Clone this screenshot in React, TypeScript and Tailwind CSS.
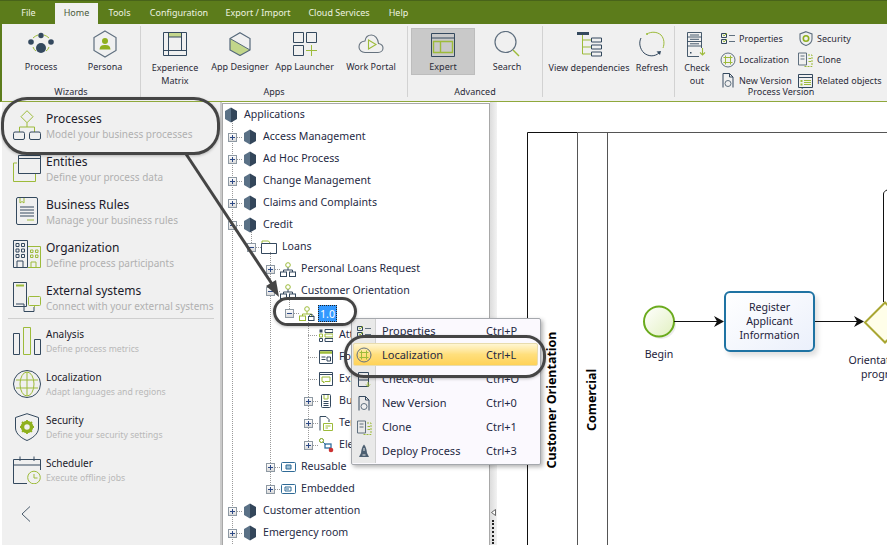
import type { ReactNode } from "react";

const NAVY = "#34495e";
const LIME = "#9dbb3a";

const TABS = [
  { label: "File", w: "w-[53px]" },
  { label: "Home", w: "w-[43px]", active: true },
  { label: "Tools", w: "w-[43px]" },
  { label: "Configuration", w: "w-[76px]" },
  { label: "Export / Import", w: "w-[82px]" },
  { label: "Cloud Services", w: "w-[80px]" },
  { label: "Help", w: "w-[39px]" },
];

function Svg({ w, h, children }: { w: number; h: number; children: ReactNode }) {
  return (
    <svg width={w} height={h} viewBox={`0 0 ${w} ${h}`} fill="none" className="shrink-0">
      {children}
    </svg>
  );
}

/* ribbon icons */
const ProcessIcon = () => (
  <Svg w={30} h={24}>
    <path d="M7 6Q9 4 12 3M18 3Q21 4 23 6M7 15Q8 18 10 19M20 19Q22 18 23 15" stroke={LIME} strokeWidth="1" />
    <circle cx="15" cy="3.5" r="2.7" fill={NAVY} />
    <circle cx="5" cy="10" r="2.8" fill={NAVY} />
    <circle cx="25" cy="10" r="2.8" fill={NAVY} />
    <circle cx="15" cy="16" r="5" fill={NAVY} />
  </Svg>
);
const PersonaIcon = () => (
  <Svg w={24} h={28}>
    <path d="M12 1 23 7.5V20.5L12 27 1 20.5V7.5Z" stroke="#5f6f7f" strokeWidth="1.2" />
    <circle cx="12" cy="11" r="3" fill="#8fb01e" />
    <path d="M6.5 19.5C7 15.5 9 15 12 15S17 15.500 17.500 19.500Z" fill="#8fb01e" />
  </Svg>
);
const MatrixIcon = () => (
  <Svg w={24} h={24}>
    <path d="M5.500 1H18.500V5H5.500Z" fill="#c4d68c" />
    <path d="M.5.500H23.500V23.500H.5ZM5.500.500V23.500M18.500.500V18.500M.5 18.500H23.500M5.500 5H18.500" stroke={NAVY} />
  </Svg>
);
const DesignerIcon = () => (
  <Svg w={22} h={24}>
    <path d="M1 6.500 21 18 11 23.500 1 18Z" fill="#c2d68a" />
    <path d="M11 .7 21 6.500V18L11 23.500 1 18V6.500Z" stroke="#55687a" strokeWidth="1.2" />
    <path d="M1 6.500 21 18" stroke="#55687a" />
  </Svg>
);
const LauncherIcon = () => (
  <Svg w={24} h={24}>
    <path d="M.5.500H10.500V10.500H.5ZM13.500.500H23.500V10.500H13.500ZM.5 13.500H10.500V23.500H.5Z" stroke={NAVY} />
    <path d="M18.500 13V24M13 18.500H24" stroke={LIME} />
  </Svg>
);
const PortalIcon = () => (
  <Svg w={26} h={20}>
    <path d="M7 18.500H20C23 18.500 25 16.500 25 14S23 10 20.500 9.500C20 4.500 17 1 13.500 1 10 1 7.500 3.500 7 7 3 7.500 1 10 1 13S3.500 18.500 7 18.500Z" stroke="#66727e" strokeWidth="1.1" />
    <path d="M10.500 6V15L18 10.500Z" stroke={LIME} strokeWidth="1.1" />
  </Svg>
);
const ExpertIcon = () => (
  <Svg w={24} h={24}>
    <path d="M.5.500H23.500V23.500H.5ZM.5 5H23.500" stroke={NAVY} />
    <path d="M2.500 8.500H9.500V19.500H2.500ZM9.500 8.500H21.500V19.500H9.500Z" stroke={LIME} strokeWidth="1.4" />
  </Svg>
);
const SearchIcon = () => (
  <Svg w={26} h={26}>
    <circle cx="11.500" cy="11" r="10.500" stroke="#5f6f7f" strokeWidth="1.2" />
    <path d="M19 19 25 25" stroke={LIME} strokeWidth="1.4" />
  </Svg>
);
const DepsIcon = () => (
  <Svg w={26} h={26}>
    <path d="M1 1H13V4H1Z" fill={NAVY} />
    <path d="M6.500 4V23H15M6.500 9H15M6.500 16H15" stroke={LIME} />
    <path d="M15.500 7H25.500V11H15.500ZM15.500 14H25.500V18H15.500ZM15.500 21H25.500V25H15.500Z" stroke={NAVY} />
  </Svg>
);
const RefreshIcon = () => (
  <Svg w={26} h={26}>
    <path d="M8 3C12 .5 18 .5 22 4 25.500 8 25.500 13 24 17" stroke={LIME} />
    <circle cx="8" cy="3" r="1" fill={LIME} />
    <path d="M2 7C-.5 12 1 18 5 22 10 26 16 25.500 20 22" stroke={NAVY} />
    <path d="M17.500 20.500 22 20 21 24Z" fill={NAVY} />
  </Svg>
);
const CheckoutIcon = () => (
  <Svg w={20} h={25}>
    <path d="M.5.500H14.500V24.500H.5ZM.5 5H14.500M.5 9.500H14.500M.5 14H14.500M3 3H12M3 7.300H12M3 11.800H12" stroke={NAVY} strokeWidth=".9" />
    <rect x="3" y="20" width="1.500" height="1.500" fill={NAVY} />
    <rect x="12" y="16" width="7" height="9" fill="#f0f0f0" />
    <path d="M15.500 16V23M13 20.500 15.500 23 18 20.500" stroke={LIME} strokeWidth="1.100" />
  </Svg>
);
const PropsIcon = () => (
  <Svg w={14} h={13}>
    <path d="M.5 1.500H5.500V5.500H.5ZM.5 7.500H5.500V11.500H.5Z" stroke={NAVY} />
    <path d="M2 2.500 3 4 6 1M2 8.500 3 10 6 7" stroke={LIME} />
    <path d="M8 3.500H14M8 9.500H14" stroke="#60707f" />
  </Svg>
);
const GlobeSmall = () => (
  <Svg w={16} h={16}>
    <circle cx="8" cy="8" r="7" stroke="#5f6f7f" />
    <path d="M5.500 3.500V12.500M10.500 3.500V12.500M3.500 5.500H12.500M3.500 10.500H12.500" stroke={LIME} />
  </Svg>
);
const VersionIcon = () => (
  <Svg w={12} h={15}>
    <path d="M1 14.500V.5H7.500L11 4V14.500" stroke={NAVY} />
    <path d="M7.500.5V4H11" stroke={NAVY} />
    <circle cx="6" cy="10.500" r="3" fill="#f0f0f0" stroke="#60707f" />
  </Svg>
);
const ShieldSmall = () => (
  <Svg w={14} h={15}>
    <path d="M7 .7 13 3V8C13 11 10 13.500 7 14.500 4 13.500 1 11 1 8V3Z" stroke="#5f6f7f" strokeWidth="1.100" />
    <circle cx="7" cy="7.500" r="2.700" stroke="#8fb01e" strokeWidth="1.600" />
  </Svg>
);
const CloneIcon = () => (
  <Svg w={15} h={15}>
    <path d="M.5 1H8.500V13H.5ZM2.500 4H6.500M2.500 7H6.500" stroke="#60707f" />
    <path d="M10 3H14V14.500H6" stroke={LIME} strokeDasharray="2 1" />
    <path d="M10.500 6.500H13M10.500 9.500H13" stroke={LIME} />
  </Svg>
);
const RelatedIcon = () => (
  <Svg w={15} h={14}>
    <path d="M.5.500H14.500V13.500H.5ZM.5 3.500H14.500" stroke={NAVY} />
    <path d="M6 6.500H13M6 8.500H13M6 10.500H13" stroke={LIME} />
    <path d="M2.500 6H4.500V8H2.500ZM2.500 9.500H4.500V11.500H2.500Z" fill={LIME} />
  </Svg>
);

function RibbonItem({ w, label, icon, labelClass = "" }: { w: string; label: ReactNode; icon: ReactNode; labelClass?: string }) {
  return (
    <div className={`${w} flex flex-col items-center pt-[4px] shrink-0`}>
      <div className="h-[32px] shrink-0 flex items-center justify-center">{icon}</div>
      <div className={`text-center leading-[13px] shrink-0 ${labelClass}`}>{label}</div>
    </div>
  );
}

function RibbonGroup({ w, label, children }: { w: string; label?: string; children: ReactNode }) {
  return (
    <div className={`${w} shrink-0 flex`}>
      <div className="flex-1 flex flex-col">
        <div className="h-[60px] flex">{children}</div>
        {label && <div className="h-[14px] leading-[15px] text-center">{label}</div>}
      </div>
      <div className="w-px bg-[#d2d2d2] mt-[2px] mb-[4px]" />
    </div>
  );
}

function SmallItem({ icon, label }: { icon: ReactNode; label: string }) {
  return (
    <div className="h-[21px] flex items-center whitespace-nowrap">
      <div className="w-[17px] flex justify-center">{icon}</div>
      <span className="ml-[3px]">{label}</span>
    </div>
  );
}

function Ribbon() {
  return (
    <div className="h-[101px] border-l-2 border-[#5c7c1b] bg-[#f0f0f0] border-b border-b-[#8fa83c] box-content text-[9px] text-[#2b2b38] shrink-0">
      <div className="h-[24px] -ml-[2px] bg-[#5c7c1b] border-t border-[#48631a] flex items-end pl-[2px]">
        {TABS.map((t) => (
          <div
            key={t.label}
            className={`${t.w} h-[21px] leading-[19px] text-center ${t.active ? "bg-[#f0f0f0] text-[#4a5a3a]" : "text-[#eef3e0]"}`}
          >
            {t.label}
          </div>
        ))}
      </div>
      <div className="flex h-[77px]">
        <RibbonGroup w="w-[139px]" label="Wizards">
          <RibbonItem w="w-[78px]" label="Process" icon={<ProcessIcon />} />
          <RibbonItem w="w-[50px]" label="Persona" icon={<PersonaIcon />} />
        </RibbonGroup>
        <RibbonGroup w="w-[267px]" label="Apps">
          <RibbonItem w="w-[68px]" label={<>Experience<br />Matrix</>} icon={<MatrixIcon />} labelClass="mt-[1px]" />
          <RibbonItem w="w-[62px]" label="App Designer" icon={<DesignerIcon />} />
          <RibbonItem w="w-[67px]" label="App Launcher" icon={<LauncherIcon />} />
          <RibbonItem w="w-[66px]" label="Work Portal" icon={<PortalIcon />} />
        </RibbonGroup>
        <RibbonGroup w="w-[135px]" label="Advanced">
          <div className="ml-[3px] mt-[4px] w-[64px] h-[47px] bg-[#c9c9c9] border border-[#bdbdbd] flex flex-col items-center shrink-0">
            <div className="h-[31px] flex items-center"><ExpertIcon /></div>
            <div className="leading-[13px]">Expert</div>
          </div>
          <RibbonItem w="w-[64px]" label="Search" icon={<SearchIcon />} />
        </RibbonGroup>
        <RibbonGroup w="w-[132px]">
          <RibbonItem w="w-[92px]" label="View dependencies" icon={<DepsIcon />} labelClass="mt-[1px] whitespace-nowrap" />
          <RibbonItem w="w-[34px]" label="Refresh" icon={<RefreshIcon />} labelClass="mt-[1px]" />
        </RibbonGroup>
        <div className="w-[212px] shrink-0 flex flex-col">
          <div className="h-[60px] flex">
            <RibbonItem w="w-[44px]" label={<>Check<br />out</>} icon={<CheckoutIcon />} labelClass="mt-[1px]" />
            <div className="w-[78px] pt-[4px] shrink-0">
              <SmallItem icon={<PropsIcon />} label="Properties" />
              <SmallItem icon={<GlobeSmall />} label="Localization" />
              <SmallItem icon={<VersionIcon />} label="New Version" />
            </div>
            <div className="pt-[4px]">
              <SmallItem icon={<ShieldSmall />} label="Security" />
              <SmallItem icon={<CloneIcon />} label="Clone" />
              <SmallItem icon={<RelatedIcon />} label="Related objects" />
            </div>
          </div>
          <div className="relative h-[14px] leading-[15px] text-center">Process Version</div>
        </div>
      </div>
    </div>
  );
}

/* sidebar icons */
const S = { stroke: NAVY, strokeWidth: 1 };
const L = { stroke: LIME, strokeWidth: 1 };
const SB_TOP = [
  {
    title: "Processes", sub: "Model your business processes",
    icon: (
      <Svg w={28} h={30}>
        <path d="M14 .7 20 6.700 14 12.700 8 6.700Z" {...L} />
        <path d="M14 12.700V17M6.500 22V17H21.500V22" {...L} />
        <rect x=".5" y="22" width="11" height="7.500" rx="1.500" {...S} />
        <rect x="16.500" y="22" width="11" height="7.500" rx="1.500" {...S} />
      </Svg>
    ),
  },
  {
    title: "Entities", sub: "Define your process data",
    icon: (
      <Svg w={28} h={27}>
        <path d="M4 8H.5V26.500H22.500V19" {...L} />
        <path d="M5.500.5H27.500V18.500H5.500ZM5.500 3.500H27.500" {...S} />
      </Svg>
    ),
  },
  {
    title: "Business Rules", sub: "Manage your business rules",
    icon: (
      <Svg w={22} h={28}>
        <rect x=".5" y=".5" width="21" height="27" rx="1.500" {...S} />
        <path d="M4 1V6L6 4.500 8 6V1" {...L} />
        <path d="M4 10H18M4 13H18M4 16H18M4 19H18" {...S} />
        <path d="M11 23H18" {...L} />
      </Svg>
    ),
  },
  {
    title: "Organization", sub: "Define process participants",
    icon: (
      <Svg w={28} h={28}>
        <path d="M.5.5H14.500V27.500H.5ZM4 27.500V21H10V27.500" {...S} />
        <path d="M3 3.500H6V6.500H3ZM8.500 3.500H11.500V6.500H8.500ZM3 9H6V12H3ZM8.500 9H11.500V12H8.500ZM3 14.500H6V17.500H3ZM8.500 14.500H11.500V17.500H8.500Z" {...S} />
        <path d="M15 6.500H27.500V27.500H15M18 27.500V22H23V27.500M17.500 10H20V12.500H17.500ZM22.500 10H25V12.500H22.500ZM17.500 15H20V17.500H17.500ZM22.500 15H25V17.500H22.500Z" {...L} />
      </Svg>
    ),
  },
  {
    title: "External systems", sub: "Connect with your external systems",
    icon: (
      <Svg w={28} h={30}>
        <path d="M.5.5H13.500V24.500H.5ZM3 22H11V29.500" {...S} />
        <path d="M3 3.500H11" stroke={LIME} strokeWidth="2" />
        <path d="M11 29.500H21V25" {...S} />
        <rect x="15.500" y="14.500" width="12" height="9" rx="1" {...L} />
        <path d="M21.500 23.500V25.500" {...L} />
      </Svg>
    ),
  },
];
const SB_BOTTOM = [
  {
    title: "Analysis", sub: "Define process metrics",
    icon: (
      <Svg w={28} h={28}>
        <path d="M.5 6.500H6.500V27.500H.5ZM21.500 12.500H27.500V27.500H21.500Z" {...S} />
        <path d="M10.500.5H17.500V27.500H10.500Z" {...L} />
      </Svg>
    ),
  },
  {
    title: "Localization", sub: "Adapt languages and regions",
    icon: (
      <Svg w={28} h={28}>
        <circle cx="14" cy="14" r="13.500" {...S} />
        <ellipse cx="14" cy="14" rx="7" ry="12" {...L} />
        <path d="M3 10H25M3 18H25M14 2V26" {...L} />
      </Svg>
    ),
  },
  {
    title: "Security", sub: "Define your security settings",
    icon: (
      <Svg w={24} h={28}>
        <path d="M12 .7 23.500 4.500V15C23.500 21 17 25.500 12 27.500 7 25.500.5 21 .5 15V4.500Z" {...S} />
        <circle cx="12" cy="14" r="4.500" stroke="#8fb01e" strokeWidth="3.500" />
        <path d="M12 7V21M5 14H19M7 9 17 19M17 9 7 19" stroke="#8fb01e" strokeWidth="1.800" strokeDasharray="2 10" />
      </Svg>
    ),
  },
  {
    title: "Scheduler", sub: "Execute offline jobs",
    icon: (
      <Svg w={28} h={28}>
        <path d="M14 27.500H.5V3.500H27.500V14M.5 9H27.500M7 .5V5M21 .5V5" {...S} />
        <circle cx="21" cy="21.500" r="6.300" fill="#f0f0f0" {...L} />
        <path d="M21 18V22H24.500" {...L} />
      </Svg>
    ),
  },
];

function Sidebar() {
  return (
    <div className="w-[220px] ml-[2px] shrink-0 bg-[#f0f0f0] border-r-2 border-[#cacaca] pt-[3px] relative">
      {SB_TOP.map((it) => (
        <div key={it.title} className="h-[43px] flex items-center pl-[10px]">
          <div className="w-[30px] -mt-[3px] flex justify-center">{it.icon}</div>
          <div className="ml-[4px] whitespace-nowrap">
            <div className="text-[12px] leading-[16px] text-[#1a1a2a]">{it.title}</div>
            <div className="text-[10px] leading-[15px] text-[#b0b0b0]">{it.sub}</div>
          </div>
        </div>
      ))}
      <div className="h-px mx-[6px] bg-[#cfcfcf] -mt-[2px]" />
      <div className="h-px" />
      {SB_BOTTOM.map((it) => (
        <div key={it.title} className="h-[43px] flex items-center pl-[10px]">
          <div className="w-[30px] -mt-[2px] flex justify-center">{it.icon}</div>
          <div className="ml-[4px] whitespace-nowrap">
            <div className="text-[10px] leading-[15px] text-[#1a1a2a]">{it.title}</div>
            <div className="text-[8.7px] leading-[15px] text-[#b8b8b8]">{it.sub}</div>
          </div>
        </div>
      ))}
      <div className="pl-[19px] pt-[14px]">
        <svg width="10" height="16" viewBox="0 0 10 16" fill="none">
          <path d="M9 .5 1 8 9 15.500" stroke="#4a5b6c" />
        </svg>
      </div>
    </div>
  );
}

/* tree */
const Hex = () => (
  <Svg w={16} h={16}>
    <path d="M8 .5V15.500L2 12V4Z" fill="#5a7186" />
    <path d="M8 .5 14 4V12L8 15.500Z" fill="#33465a" />
  </Svg>
);
const FolderIcon = () => (
  <Svg w={16} h={14}>
    <path d="M1 3V1H7.500L9 3" stroke={LIME} />
    <path d="M.5 13.500V3.500H15.500V13.500Z" stroke={NAVY} />
  </Svg>
);
const ProcNode = ({ lock }: { lock?: boolean }) => (
  <Svg w={16} h={15}>
    <circle cx="8" cy="3" r="2.300" stroke={LIME} />
    <path d="M8 5.500V8M3.500 10V8H12.500V10" stroke={lock ? LIME : NAVY} />
    <rect x=".5" y="10" width="6" height="4.500" stroke={lock ? LIME : NAVY} />
    {lock ? (
      <>
        <rect x="9.500" y="10.500" width="5.500" height="4" stroke={NAVY} />
        <path d="M10.500 10.500V9.500C10.500 8 14 8 14 9.500V10.500" stroke={NAVY} />
      </>
    ) : (
      <rect x="9.500" y="10" width="6" height="4.500" stroke={NAVY} />
    )}
  </Svg>
);
const AttrIcon = () => (
  <Svg w={14} h={13}>
    <path d="M.5.5H3.500V3.500H.5Z" fill={NAVY} />
    <path d="M6 .5H14V3.500H6ZM6 9.500H14V12.500H6Z" stroke={NAVY} />
    <path d="M.5 5H3.500V8H.5ZM6 5H14V8H6Z" stroke={LIME} />
    <path d="M.5 9.500H3.500V12.500H.5Z" stroke={NAVY} />
  </Svg>
);
const FormIcon = () => (
  <Svg w={14} h={14}>
    <path d="M.5.5H13.500V13.500H.5Z" stroke={NAVY} />
    <path d="M1 2.500H13" stroke={LIME} strokeWidth="2.500" />
    <path d="M2.500 7H6.500M2.500 9.500H6.500" stroke={NAVY} />
    <path d="M8 7H11.500V11H8Z" stroke={NAVY} />
  </Svg>
);
const ExprIcon = () => (
  <Svg w={14} h={14}>
    <path d="M.5.5H13.500V13.500H.5ZM.5 2.500H13.500" stroke={NAVY} />
    <path d="M3 5H11V9.500H6L4.500 11V9.500H3Z" stroke={LIME} />
  </Svg>
);
const BookIcon = () => (
  <Svg w={10} h={14}>
    <rect x=".5" y=".5" width="9" height="13" rx="1" stroke={NAVY} />
    <path d="M3 1V5H7V1" stroke={LIME} />
    <path d="M2.500 7.500H7.500M2.500 9.500H7.500M2.500 11.500H7.500" stroke={NAVY} />
  </Svg>
);
const TplIcon = () => (
  <Svg w={14} h={15}>
    <path d="M1 14.500V.5H7L10 3.500V6" stroke={NAVY} />
    <path d="M4.500 7.500H13.500V14.500H4.500Z" stroke={LIME} fill="#fff" />
    <path d="M6.500 10H11.500M6.500 12H9" stroke={LIME} />
  </Svg>
);
const EleIcon = () => (
  <Svg w={15} h={15}>
    <circle cx="2.500" cy="2.500" r="2" stroke="#6f9a10" />
    <path d="M4 4 7 7" stroke="#2f6fa0" />
    <rect x="6" y="6" width="6" height="4" stroke="#2f6fa0" strokeWidth="1.300" />
    <path d="M10 10 11.500 11" stroke={NAVY} />
    <circle cx="12" cy="12" r="2.300" fill="#c33" />
  </Svg>
);
const ReuseIcon = () => (
  <Svg w={15} h={10}>
    <rect x=".5" y=".5" width="14" height="9" rx="1" stroke="#2f6a96" />
    <path d="M5 3H10V7H5Z" stroke="#2f6a96" fill="#9ec0d6" />
  </Svg>
);
const EmbedIcon = () => (
  <Svg w={15} h={10}>
    <rect x=".5" y=".5" width="14" height="9" rx="1" stroke="#2f6a96" />
    <path d="M4 3H10V7H4ZM5 5H8" stroke="#2f6a96" />
  </Svg>
);

type TreeRow = { level: number; label: string; icon: ReactNode; exp?: "+" | "-"; selected?: boolean };
const hex = <Hex />;
const ROWS: TreeRow[] = [
  { level: 0, label: "Applications", icon: hex },
  { level: 1, label: "Access Management", icon: hex, exp: "+" },
  { level: 1, label: "Ad Hoc Process", icon: hex, exp: "+" },
  { level: 1, label: "Change Management", icon: hex, exp: "+" },
  { level: 1, label: "Claims and Complaints", icon: hex, exp: "+" },
  { level: 1, label: "Credit", icon: hex, exp: "-" },
  { level: 2, label: "Loans", icon: <FolderIcon />, exp: "-" },
  { level: 3, label: "Personal Loans Request", icon: <ProcNode />, exp: "+" },
  { level: 3, label: "Customer Orientation", icon: <ProcNode />, exp: "-" },
  { level: 4, label: "1.0", icon: <ProcNode lock />, exp: "-", selected: true },
  { level: 5, label: "Attributes", icon: <AttrIcon /> },
  { level: 5, label: "Forms", icon: <FormIcon /> },
  { level: 5, label: "Expressions", icon: <ExprIcon /> },
  { level: 5, label: "Business Rules", icon: <BookIcon />, exp: "+" },
  { level: 5, label: "Templates", icon: <TplIcon />, exp: "+" },
  { level: 5, label: "Elements", icon: <EleIcon />, exp: "+" },
  { level: 3, label: "Reusable", icon: <ReuseIcon />, exp: "+" },
  { level: 3, label: "Embedded", icon: <EmbedIcon />, exp: "+" },
  { level: 1, label: "Customer attention", icon: hex, exp: "+" },
  { level: 1, label: "Emergency room", icon: hex, exp: "+" },
];

function Expander({ kind }: { kind: "+" | "-" }) {
  return (
    <svg width="9" height="9" viewBox="0 0 9 9" className="shrink-0 relative">
      <defs>
        <linearGradient id="expg" x1="0" y1="0" x2="0" y2="1">
          <stop offset="0" stopColor="#ffffff" />
          <stop offset="1" stopColor="#d8d8d8" />
        </linearGradient>
      </defs>
      <rect x=".5" y=".5" width="8" height="8" fill="url(#expg)" stroke="#8e99a3" />
      <path d={kind === "+" ? "M2 4.500H7M4.500 2V7" : "M2 4.500H7"} stroke="#2d4a86" />
    </svg>
  );
}

function TreeGuides() {
  // dotted connectors, coordinates relative to the tree's top left corner
  const vert = [
    [9, 15, 442],
    [28, 126, 143],
    [47, 148, 385],
    [66, 192, 209],
    [85, 214, 341],
  ];
  return (
    <svg className="absolute left-0 top-0" width="266" height="442" fill="none">
      {vert.map(([x, a, b]) => (
        <line key={x} x1={x + 0.5} x2={x + 0.5} y1={a} y2={b} stroke="#9a9a9a" strokeDasharray="1 1" />
      ))}
      {ROWS.map((r, i) => {
        if (r.level === 0) return null;
        const x = 5 + (r.level - 1) * 19;
        const y = i * 22 + 11.5;
        return <line key={i} x1={x + (r.exp ? 9 : 4)} x2={x + 14} y1={y} y2={y} stroke="#9a9a9a" strokeDasharray="1 1" />;
      })}
    </svg>
  );
}

function Tree() {
  return (
    <div className="w-[268px] shrink-0 bg-white border-l border-r border-[#a8a8a8] mt-px overflow-hidden">
      <div className="h-px bg-[#a8a8a8]" />
      <div className="relative text-[10.6px] text-[#1f2a44]">
        <TreeGuides />
        {ROWS.map((r) => (
          <div
            key={r.label}
            className="relative h-[22px] flex items-center whitespace-nowrap"
            style={{ paddingLeft: r.level === 0 ? 0 : 5 + (r.level - 1) * 19 }}
          >
            {r.level > 0 &&
              (r.exp ? <Expander kind={r.exp} /> : <span className="w-[9px] shrink-0" />)}
            <div className={`w-[16px] flex justify-center shrink-0 ${r.level > 0 ? "ml-[5px]" : ""}`}>{r.icon}</div>
            {r.selected ? (
              <span className="ml-[3px] w-[19px] h-[17px] leading-[16px] text-center bg-[#3399ff] text-white border border-dotted border-[#222] text-[10.6px]">{r.label}</span>
            ) : (
              <span className="ml-[5px]">{r.label}</span>
            )}
          </div>
        ))}
      </div>
    </div>
  );
}

function Splitter() {
  return (
    <div className="w-[7px] shrink-0 bg-gradient-to-r from-[#dcdcdc] to-[#f2f2f2] flex flex-col items-center pt-[407px]">
      <svg width="5" height="7" viewBox="0 0 5 7" className="-ml-[1px]">
        <path d="M4.500.5V6.500L.5 3.500Z" fill="#fff" stroke="#444" strokeWidth=".8" />
      </svg>
      <div className="w-[2px] h-[24px] mt-[4px] border-l-2 border-dotted border-[#222] -ml-[1px]" />
    </div>
  );
}

/* bpmn canvas, coordinates relative to the canvas */
function Canvas() {
  return (
    <div className="relative flex-1 bg-white overflow-hidden text-[10.6px] text-[#22223a]">
      <svg className="absolute inset-0" width="390" height="443" fill="none">
        <defs>
          <linearGradient id="startg" x1="0" y1="0" x2="1" y2="1">
            <stop offset="0" stopColor="#ffffff" />
            <stop offset="1" stopColor="#e2f0c0" />
          </linearGradient>
        </defs>
        <path d="M30.500 443V30.500H80.500" stroke="#111" />
        <path d="M80.500 30.500H390M80.500 30.500V443M110.500 30.500V443" stroke="#555" />
        <circle cx="164" cy="222" r="15" fill="#000" opacity=".08" />
        <circle cx="162" cy="219.500" r="15" fill="url(#startg)" stroke="#6bab1e" strokeWidth="2" />
        <path d="M177 219.500H222" stroke="#111" />
        <path d="M318 219.500H365" stroke="#111" />
        <path d="M217 214 227 219.500 217 225 220 219.500Z" fill="#111" />
        <path d="M357 214 367 219.500 357 225 360 219.500Z" fill="#111" />
        <path d="M386.500 200V92C386.500 90 388 89 390 88" stroke="#111" />
        <path d="M388 200.500 368 220.500 388 240.500 408 220.500Z" fill="#fffee9" stroke="#a9a632" strokeWidth="2" />
      </svg>
      <div className="absolute left-[227px] top-[189px] w-[91px] h-[61px] pb-[2px] rounded-[6px] border-2 border-[#1f73a3] bg-gradient-to-br from-white to-[#ebf0fb] shadow-[3px_4px_5px_rgba(0,0,0,0.12)] flex items-center justify-center text-center leading-[14px]">
        <div>Register<br />Applicant<br />Information</div>
      </div>
      <div className="absolute left-[132px] w-[60px] top-[245px] text-center leading-[14px]">Begin</div>
      <div className="absolute left-[346px] w-[80px] top-[251px] text-center leading-[14px]">Orientation in<br />progress</div>
      <div className="absolute left-[55px] top-[298px] -translate-x-1/2 -translate-y-1/2 -rotate-90 whitespace-nowrap font-bold text-[12.5px] text-black">Customer Orientation</div>
      <div className="absolute left-[95px] top-[298px] -translate-x-1/2 -translate-y-1/2 -rotate-90 whitespace-nowrap font-bold text-[12.5px] text-black">Comercial</div>
    </div>
  );
}

/* context menu */
const MENU = [
  { label: "Properties", key: "Ctrl+P", icon: <PropsIcon /> },
  { label: "Localization", key: "Ctrl+L", icon: <GlobeSmall />, active: true },
  { label: "Check-out", key: "Ctrl+O", icon: (
    <Svg w={13} h={15}>
      <path d="M.5.5H10.500V14.500H.5ZM.5 4H10.500M.5 8H10.500" stroke={NAVY} />
      <path d="M10 10V14M8 12.500 10 14.500 12 12.500" stroke={LIME} />
    </Svg>
  ) },
  { label: "New Version", key: "Ctrl+0", icon: <VersionIcon /> },
  { label: "Clone", key: "Ctrl+1", icon: <CloneIcon /> },
  { label: "Deploy Process", key: "Ctrl+3", icon: (
    <Svg w={12} h={14}>
      <path d="M6 .5C8 3 8.500 5 9 9L11 13H1L3 9C3.500 5 4 3 6 .5Z" fill="#4b5e70" />
      <path d="M4.500 11H7.500M6 4V7" stroke="#e8e8e8" />
    </Svg>
  ) },
];

function ContextMenu() {
  return (
    <div className="absolute left-[351px] top-[318px] w-[190px] h-[147px] bg-[#fbf9fe] border border-[#a5a8ad] rounded-[2px] shadow-[2px_2px_4px_rgba(0,0,0,0.3)] text-[11px] text-[#1f2a44]">
      {MENU.map((m) => (
        <div key={m.label} className="relative h-[24px] flex items-center whitespace-nowrap">
          <div className="w-[24px] h-full bg-[#e9e9e9] border-r border-[#d0d0d0] shrink-0" />
          {m.active && (
            <div className="absolute left-[1px] right-[2px] top-0 bottom-[1px] rounded-[2px] border border-[#e8dcae] bg-gradient-to-b from-[#fff6d2] via-[#ffdf7c] to-[#ffd257]" />
          )}
          <div className="absolute left-0 w-[24px] flex justify-center">{m.icon}</div>
          <span className="relative ml-[6px] w-[104px]">{m.label}</span>
          <span className="relative">{m.key}</span>
        </div>
      ))}
    </div>
  );
}

function Annotations() {
  const pill = "absolute border-[3px] border-[#454545] shadow-[0_1px_3px_rgba(0,0,0,0.25)]";
  return (
    <>
      <svg className="absolute left-0 top-0" width="887" height="545" fill="none">
        <path d="M186 154 274 287" stroke="#454545" strokeWidth="3" />
        <path d="M279 297 266 286 276 280Z" fill="#454545" />
      </svg>
      <div className={`${pill} left-[1px] top-[97px] w-[219px] h-[58px] rounded-[26px]`} />
      <div className={`${pill} left-[273px] top-[297px] w-[84px] h-[29px] rounded-[15px]`} />
      <div className={`${pill} left-[344px] top-[335px] w-[202px] h-[43px] rounded-[20px]`} />
    </>
  );
}

export default function App() {
  return (
    <div className="relative w-[887px] h-[545px] overflow-hidden bg-white flex flex-col font-['Noto_Sans',sans-serif]">
      <Ribbon />
      <div className="flex flex-1 min-h-0">
        <Sidebar />
        <Tree />
        <Splitter />
        <Canvas />
      </div>
      <ContextMenu />
      <Annotations />
    </div>
  );
}
